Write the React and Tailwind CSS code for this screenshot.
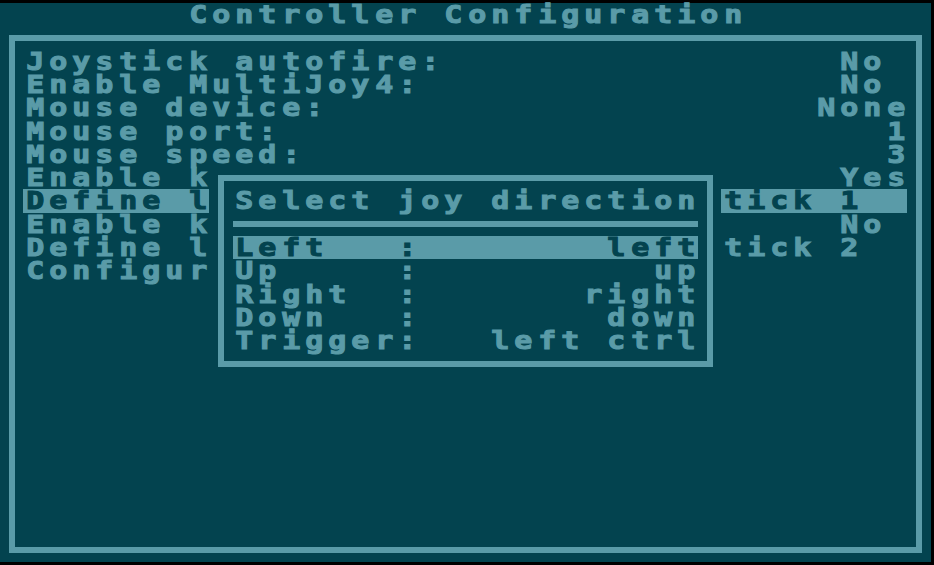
import React from "react";

const COLS = 40;
const ROWS = 24;

// grid areas inside a glyph cell: 3 columns (left, line, right) x 3 rows (top, line, bottom)
const BOX = {
  "─": ["col-start-1 col-end-4 row-start-2 row-end-3"],
  "│": ["col-start-2 col-end-3 row-start-1 row-end-4"],
  "┌": ["col-start-2 col-end-4 row-start-2 row-end-3", "col-start-2 col-end-3 row-start-2 row-end-4"],
  "┐": ["col-start-1 col-end-3 row-start-2 row-end-3", "col-start-2 col-end-3 row-start-2 row-end-4"],
  "└": ["col-start-2 col-end-4 row-start-2 row-end-3", "col-start-2 col-end-3 row-start-1 row-end-3"],
  "┘": ["col-start-1 col-end-3 row-start-2 row-end-3", "col-start-2 col-end-3 row-start-1 row-end-3"],
};

function buildScreen() {
  const s = Array.from({ length: ROWS }, () =>
    Array.from({ length: COLS }, () => ({ c: " ", inv: false }))
  );
  const put = (r, c, text, inv = false) => {
    for (let i = 0; i < text.length; i++) {
      if (c + i < COLS) s[r][c + i] = { c: text[i], inv };
    }
  };
  const fill = (r, c1, c2, inv) => {
    for (let c = c1; c <= c2; c++) s[r][c] = { c: " ", inv };
  };
  const box = (r1, c1, r2, c2) => {
    for (let r = r1; r <= r2; r++)
      for (let c = c1; c <= c2; c++) s[r][c] = { c: " ", inv: false };
    for (let c = c1 + 1; c < c2; c++) {
      s[r1][c] = { c: "─", inv: false };
      s[r2][c] = { c: "─", inv: false };
    }
    for (let r = r1 + 1; r < r2; r++) {
      s[r][c1] = { c: "│", inv: false };
      s[r][c2] = { c: "│", inv: false };
    }
    s[r1][c1] = { c: "┌", inv: false };
    s[r1][c2] = { c: "┐", inv: false };
    s[r2][c1] = { c: "└", inv: false };
    s[r2][c2] = { c: "┘", inv: false };
  };

  put(0, 8, "Controller Configuration");
  box(1, 0, 23, 39);
  put(2, 1, "Joystick autofire:");
  put(2, 36, "No");
  put(3, 1, "Enable MultiJoy4:");
  put(3, 36, "No");
  put(4, 1, "Mouse device:");
  put(4, 35, "None");
  put(5, 1, "Mouse port:");
  put(5, 38, "1");
  put(6, 1, "Mouse speed:");
  put(6, 38, "3");
  put(7, 1, "Enable keyboard joystick 1:");
  put(7, 36, "Yes");
  fill(8, 1, 38, true);
  put(8, 1, "Define layout of keyboard joystick 1", true);
  put(9, 1, "Enable keyboard joystick 2:");
  put(9, 36, "No");
  put(10, 1, "Define layout of keyboard joystick 2");
  put(11, 1, "Configure real joysticks");

  box(7, 9, 15, 30);
  put(8, 10, "Select joy direction");
  for (let c = 10; c <= 29; c++) s[9][c] = { c: "─", inv: false };
  fill(10, 10, 29, true);
  put(10, 10, "Left   :", true);
  put(10, 26, "left", true);
  put(11, 10, "Up     :");
  put(11, 28, "up");
  put(12, 10, "Right  :");
  put(12, 25, "right");
  put(13, 10, "Down   :");
  put(13, 26, "down");
  put(14, 10, "Trigger:");
  put(14, 21, "left ctrl");
  return s;
}

function Cell({ cell }) {
  const { c, inv } = cell;
  const base = inv
    ? "bg-[#5a9ba8] text-[#03434f]"
    : "bg-[#03434f] text-[#5a9ba8]";
  const parts = BOX[c];
  if (parts) {
    return (
      <div
        className={`grid w-[23.275px] h-[23.29px] shrink-0 grid-cols-[8.73px_5.82px_1fr] grid-rows-[8.73px_5.82px_1fr] ${base}`}
      >
        {parts.map((p, i) => (
          <div key={i} className={`bg-[#5a9ba8] ${p}`} />
        ))}
      </div>
    );
  }
  return (
    <div
      className={`flex w-[23.275px] h-[23.29px] shrink-0 items-center justify-center ${base}`}
    >
      {c !== " " ? (
        <span className="inline-block scale-x-[1.25] translate-y-[1px] leading-[21px]">
          {c}
        </span>
      ) : null}
    </div>
  );
}

export default function App() {
  const screen = buildScreen();
  return (
    <div className="w-[934px] h-[565px] bg-black pt-[3px] overflow-hidden">
      <div
        className="flex flex-col w-[931px] bg-[#03434f] font-bold text-[24px] [-webkit-text-stroke:1px_currentColor]"
        style={{ fontFamily: "'DejaVu Sans Mono', 'Liberation Mono', monospace" }}
      >
        {screen.map((row, r) => (
          <div key={r} className="flex">
            {row.map((cell, c) => (
              <Cell key={c} cell={cell} />
            ))}
          </div>
        ))}
      </div>
    </div>
  );
}
